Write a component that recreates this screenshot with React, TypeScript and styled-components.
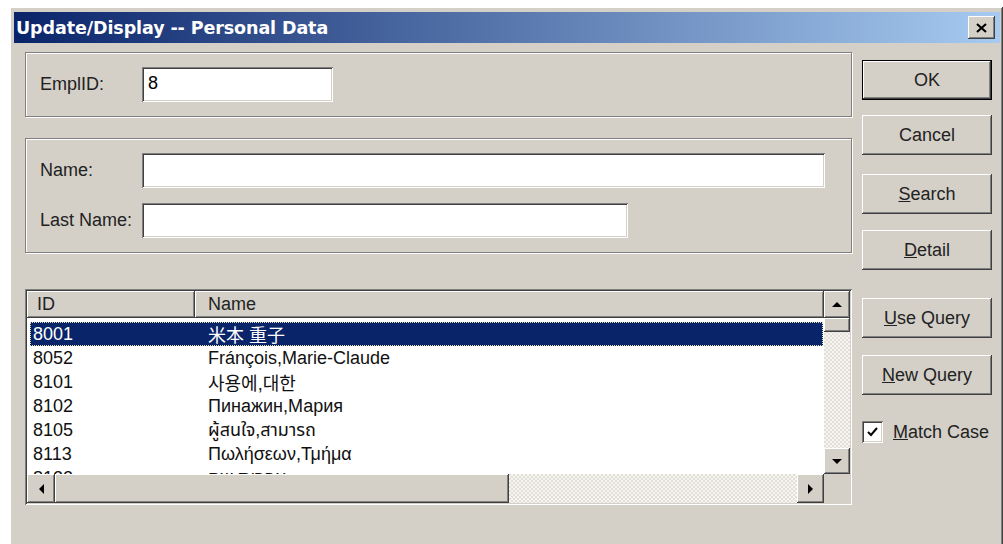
import React from "react";
import styled, { createGlobalStyle } from "styled-components";

const GlobalStyle = createGlobalStyle`
  html, body {
    margin: 0;
    padding: 0;
    background: #fff;
  }
  body {
    font-family: "Liberation Sans", "Noto Sans CJK JP", "Noto Sans", sans-serif;
    font-size: 18px;
    color: #000;
  }
`;

const rows = [
  { id: "8001", name: "米本 重子" },
  { id: "8052", name: "Fránçois,Marie-Claude" },
  { id: "8101", name: "사용에,대한" },
  { id: "8102", name: "Пинажин,Мария" },
  { id: "8105", name: "ผู้สนใจ,สามารถ" },
  { id: "8113", name: "Πωλήσεων,Τμήμα" },
  { id: "8122", name: "עברית,שם" },
];

// classic 3d edges
const raised = `
  box-shadow:
    inset -1px -1px 0 #404040,
    inset 1px 1px 0 #fff,
    inset -2px -2px 0 #808080,
    inset 2px 2px 0 #d4d0c8;
`;

const sunken = `
  box-shadow:
    inset 1px 1px 0 #808080,
    inset -1px -1px 0 #fff,
    inset 2px 2px 0 #404040,
    inset -2px -2px 0 #d4d0c8;
`;

const Page = styled.div`
  width: 1003px;
  height: 544px;
  overflow: hidden;
  padding: 7px 0 0 10px;
  box-sizing: border-box;
`;

const Window = styled.div`
  width: 993px;
  height: 540px;
  box-sizing: border-box;
  background: #d4d0c8;
  border-right: 1px solid #404040;
  box-shadow: inset 1px 1px 0 #fff, inset -1px 0 0 #808080;
  padding: 5px 2px 0 4px;
  display: flex;
  flex-direction: column;
`;

const TitleBar = styled.div`
  height: 31px;
  display: flex;
  align-items: center;
  justify-content: space-between;
  padding: 0 5px 0 2px;
  background: linear-gradient(to right, #0a246a, #a6caf0);
`;

const Title = styled.span`
  font-family: "DejaVu Sans", sans-serif;
  font-weight: 700;
  font-size: 17.5px;
  color: #fff;
  letter-spacing: -0.1px;
`;

const CloseButton = styled.div`
  width: 27px;
  height: 23px;
  background: #d4d0c8;
  display: flex;
  align-items: center;
  justify-content: center;
  ${raised}
`;

const Body = styled.div`
  flex: 1;
  display: flex;
  gap: 10px;
  padding: 9px 0 0 11px;
`;

const LeftColumn = styled.div`
  width: 827px;
  display: flex;
  flex-direction: column;
`;

const Group = styled.div<{ $height: number; $gap?: number; $top?: number }>`
  height: ${(p) => p.$height}px;
  margin-top: ${(p) => p.$top ?? 0}px;
  box-sizing: border-box;
  border: 1px solid #808080;
  box-shadow: inset 1px 1px 0 #fff, 1px 1px 0 #fff;
  display: flex;
  flex-direction: column;
  justify-content: center;
  gap: ${(p) => p.$gap ?? 0}px;
  padding-left: 14px;
`;

const FieldRow = styled.div`
  display: flex;
  align-items: center;
`;

const Label = styled.label`
  width: 102px;
  flex-shrink: 0;
  color: #222;
`;

const TextInput = styled.div<{ $width: number }>`
  width: ${(p) => p.$width}px;
  height: 35px;
  box-sizing: border-box;
  background: #fff;
  padding: 6px 0 0 6px;
  ${sunken}
`;

const ListFrame = styled.div`
  margin-top: 36px;
  height: 216px;
  box-sizing: border-box;
  padding: 2px;
  display: flex;
  flex-direction: column;
  ${sunken}
`;

const ListMain = styled.div`
  flex: 1;
  display: flex;
  min-height: 0;
`;

const ListContent = styled.div`
  flex: 1;
  display: flex;
  flex-direction: column;
  background: #fff;
  min-width: 0;
`;

const Header = styled.div`
  height: 27px;
  display: flex;
  flex-shrink: 0;
`;

const HeaderCell = styled.div<{ $width?: number; $pad: number }>`
  ${(p) => (p.$width ? `width: ${p.$width}px;` : "flex: 1;")}
  box-sizing: border-box;
  background: #d4d0c8;
  padding-left: ${(p) => p.$pad}px;
  display: flex;
  align-items: center;
  color: #222;
  ${raised}
`;

const Rows = styled.div`
  flex: 1;
  overflow: hidden;
  padding: 4px 1px 0 3px;
`;

const Row = styled.div<{ $selected?: boolean }>`
  height: 24px;
  display: flex;
  align-items: center;
  box-sizing: border-box;
  background: ${(p) => (p.$selected ? "#0a246a" : "transparent")};
  color: ${(p) => (p.$selected ? "#fff" : "#111")};
  outline: ${(p) => (p.$selected ? "1px dotted #e6dca8" : "none")};
  outline-offset: -1px;
  white-space: nowrap;
`;

const IdCell = styled.span`
  width: 175px;
  padding-left: 3px;
  flex-shrink: 0;
`;

const NameCell = styled.span`
  font-family: "Liberation Sans", "Noto Sans CJK JP", "Noto Sans Thai", "DejaVu Sans", sans-serif;
`;

// dithered scrollbar track
const checker = `
  background-color: #fff;
  background-image: repeating-conic-gradient(#e2dfd9 0 25%, #f6f5f2 0 50%);
  background-size: 4px 4px;
`;

const VScroll = styled.div`
  width: 26px;
  display: flex;
  flex-direction: column;
  ${checker}
`;

const HScrollRow = styled.div`
  height: 29px;
  display: flex;
  flex-shrink: 0;
`;

const HScroll = styled.div`
  flex: 1;
  display: flex;
  ${checker}
`;

const ArrowButton = styled.div<{ $w: number; $h: number }>`
  width: ${(p) => p.$w}px;
  height: ${(p) => p.$h}px;
  flex-shrink: 0;
  box-sizing: border-box;
  background: #d4d0c8;
  display: flex;
  align-items: center;
  justify-content: center;
  ${raised}
`;

const Thumb = styled.div<{ $w?: number; $h?: number }>`
  ${(p) => (p.$w ? `width: ${p.$w}px;` : "")}
  ${(p) => (p.$h ? `height: ${p.$h}px;` : "")}
  flex-shrink: 0;
  background: #d4d0c8;
  ${raised}
`;

const Track = styled.div`
  flex: 1;
`;

const Corner = styled.div`
  width: 26px;
  background: #d4d0c8;
`;

const RightColumn = styled.div`
  width: 130px;
  display: flex;
  flex-direction: column;
  padding-top: 8px;
`;

const Button = styled.div<{ $default?: boolean; $space?: number }>`
  height: 40px;
  margin-top: ${(p) => p.$space ?? 0}px;
  box-sizing: border-box;
  background: #d4d0c8;
  display: flex;
  align-items: center;
  justify-content: center;
  color: #222;
  border: ${(p) => (p.$default ? "1px solid #000" : "none")};
  ${raised}
`;

const Key = styled.span`
  text-decoration: underline;
`;

const CheckRow = styled.div`
  margin-top: 26px;
  display: flex;
  align-items: center;
  gap: 10px;
  color: #222;
`;

const CheckBox = styled.div`
  width: 21px;
  height: 22px;
  box-sizing: border-box;
  background: #fff;
  display: flex;
  align-items: center;
  justify-content: center;
  ${sunken}
`;

const Arrow = ({ dir }: { dir: "up" | "down" | "left" | "right" }) => {
  const pts = {
    up: "0,5 5,0 10,5",
    down: "0,0 10,0 5,5",
    left: "5,0 5,10 0,5",
    right: "0,0 0,10 5,5",
  }[dir];
  const vertical = dir === "up" || dir === "down";
  return (
    <svg width={vertical ? 10 : 5} height={vertical ? 5 : 10}>
      <polygon points={pts} fill="#000" />
    </svg>
  );
};

export default function App() {
  return (
    <Page>
      <GlobalStyle />
      <Window>
        <TitleBar>
          <Title>Update/Display -- Personal Data</Title>
          <CloseButton>
            <svg width="11" height="10" viewBox="0 0 11 10">
              <path d="M1 1 L10 9 M10 1 L1 9" stroke="#000" strokeWidth="2.2" />
            </svg>
          </CloseButton>
        </TitleBar>
        <Body>
          <LeftColumn>
            <Group $height={65}>
              <FieldRow>
                <Label>EmplID:</Label>
                <TextInput $width={191}>8</TextInput>
              </FieldRow>
            </Group>
            <Group $height={115} $gap={15} $top={21}>
              <FieldRow>
                <Label>Name:</Label>
                <TextInput $width={683} />
              </FieldRow>
              <FieldRow>
                <Label>Last Name:</Label>
                <TextInput $width={486} />
              </FieldRow>
            </Group>
            <ListFrame>
              <ListMain>
                <ListContent>
                  <Header>
                    <HeaderCell $width={168} $pad={10}>ID</HeaderCell>
                    <HeaderCell $pad={13}>Name</HeaderCell>
                  </Header>
                  <Rows>
                    {rows.map((r, i) => (
                      <Row key={r.id} $selected={i === 0}>
                        <IdCell>{r.id}</IdCell>
                        <NameCell>{r.name}</NameCell>
                      </Row>
                    ))}
                  </Rows>
                </ListContent>
                <VScroll>
                  <ArrowButton $w={26} $h={27}>
                    <Arrow dir="up" />
                  </ArrowButton>
                  <Thumb $h={14} />
                  <Track />
                  <ArrowButton $w={26} $h={26}>
                    <Arrow dir="down" />
                  </ArrowButton>
                </VScroll>
              </ListMain>
              <HScrollRow>
                <HScroll>
                  <ArrowButton $w={28} $h={29}>
                    <Arrow dir="left" />
                  </ArrowButton>
                  <Thumb $w={454} />
                  <Track />
                  <ArrowButton $w={27} $h={29}>
                    <Arrow dir="right" />
                  </ArrowButton>
                </HScroll>
                <Corner />
              </HScrollRow>
            </ListFrame>
          </LeftColumn>
          <RightColumn>
            <Button $default>OK</Button>
            <Button $space={15}>Cancel</Button>
            <Button $space={19}>
              <Key>S</Key>earch
            </Button>
            <Button $space={16}>
              <Key>D</Key>etail
            </Button>
            <Button $space={28}>
              <Key>U</Key>se Query
            </Button>
            <Button $space={17}>
              <Key>N</Key>ew Query
            </Button>
            <CheckRow>
              <CheckBox>
                <svg width="11" height="10" viewBox="0 0 11 10">
                  <path d="M1 5 L4 8 L10 1" stroke="#000" strokeWidth="2" fill="none" />
                </svg>
              </CheckBox>
              <span>
                <Key>M</Key>atch Case
              </span>
            </CheckRow>
          </RightColumn>
        </Body>
      </Window>
    </Page>
  );
}
